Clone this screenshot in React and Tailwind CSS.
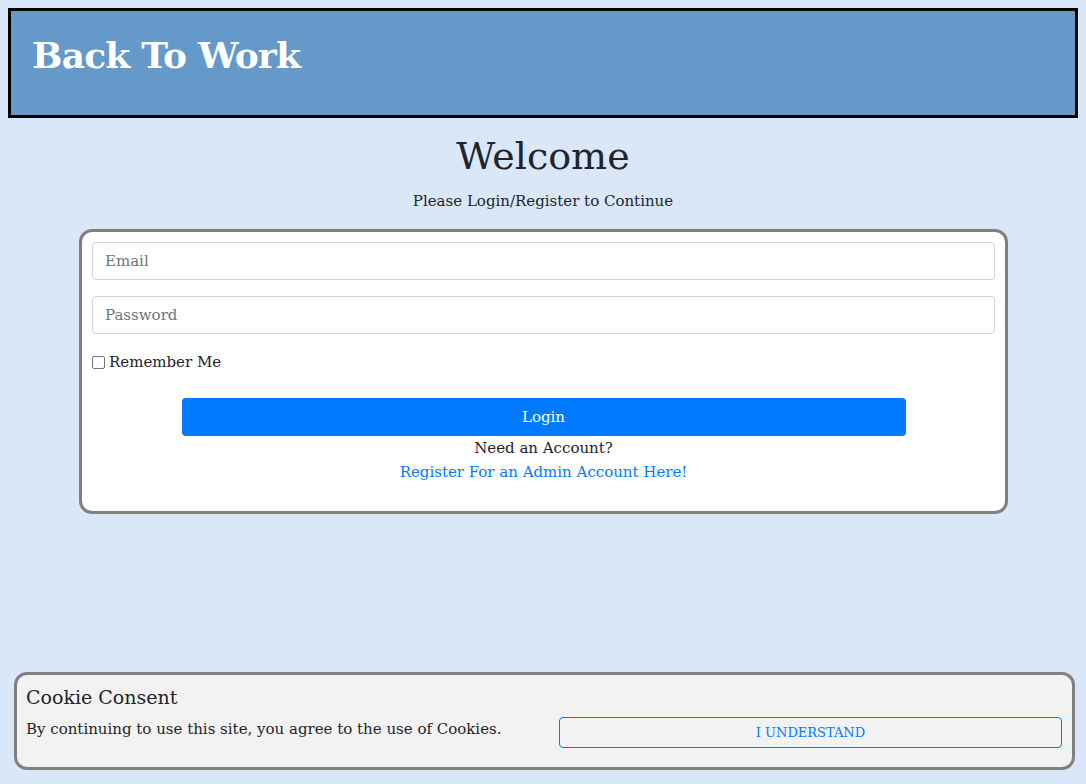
export default function App() {
  const font = { fontFamily: '"DejaVu Serif", "Liberation Serif", serif' };
  return (
    <div className="min-h-[784px] bg-[#d9e7f9] text-[#212529] relative" style={font}>
      <div className="pt-2 px-2">
        <div className="border-[3px] border-black bg-[#6499c9] h-[110px] pl-[21px] pt-[16px]">
          <h1 className="text-white text-[36px] leading-[56px] font-bold tracking-[-0.8px]">Back To Work</h1>
        </div>
      </div>
      <div className="flex flex-col items-center">
        <h2 className="text-[38px] leading-[48px] mt-[14px] text-[#212529]">Welcome</h2>
        <p className="text-[15px] leading-[24px] mt-[9px] text-[#212529]">Please Login/Register to Continue</p>
      </div>
      <div className="mt-[16px] w-[929px] ml-[79px] bg-white border-[3px] border-[#808080] rounded-[13px] px-[10px] pt-[10px] pb-[27px]">
        <div className="h-[38px] border border-[#ced4da] rounded-[4px] flex items-center px-[12px] text-[15px] text-[#6c757d]">Email</div>
        <div className="h-[38px] mt-[16px] border border-[#ced4da] rounded-[4px] flex items-center px-[12px] text-[15px] text-[#6c757d]">Password</div>
        <div className="mt-[17px] flex items-center h-[22px]">
          <span className="inline-block w-[13px] h-[13px] border border-[#767676] rounded-[2px] bg-white"></span>
          <span className="ml-[4px] text-[15px]">Remember Me</span>
        </div>
        <div className="flex flex-col items-center mt-[25px]">
          <div className="w-[724px] h-[38px] bg-[#007bff] rounded-[4px] text-white text-[15px] flex items-center justify-center">Login</div>
          <div className="text-[15px] leading-[24px]">Need an Account?</div>
          <div className="text-[15px] leading-[24px] text-[#007bff]">Register For an Admin Account Here!</div>
        </div>
      </div>
      <div className="absolute left-[14px] right-[11px] top-[672px] h-[98px] bg-[#f2f2f2] border-[3px] border-[#808080] rounded-[13px] px-[9px] pt-[8px]">
        <div className="text-[19px] leading-[28px] text-[#212529]">Cookie Consent</div>
        <div className="flex items-start mt-[6px]">
          <div className="w-[533px] text-[15px] leading-[24px] text-[#212529]">By continuing to use this site, you agree to the use of Cookies.</div>
          <div className="mt-[0px] w-[503px] h-[31px] border border-[#007bff] rounded-[4px] flex items-center justify-center text-[13px] text-[#007bff]">I UNDERSTAND</div>
        </div>
      </div>
    </div>
  );
}
